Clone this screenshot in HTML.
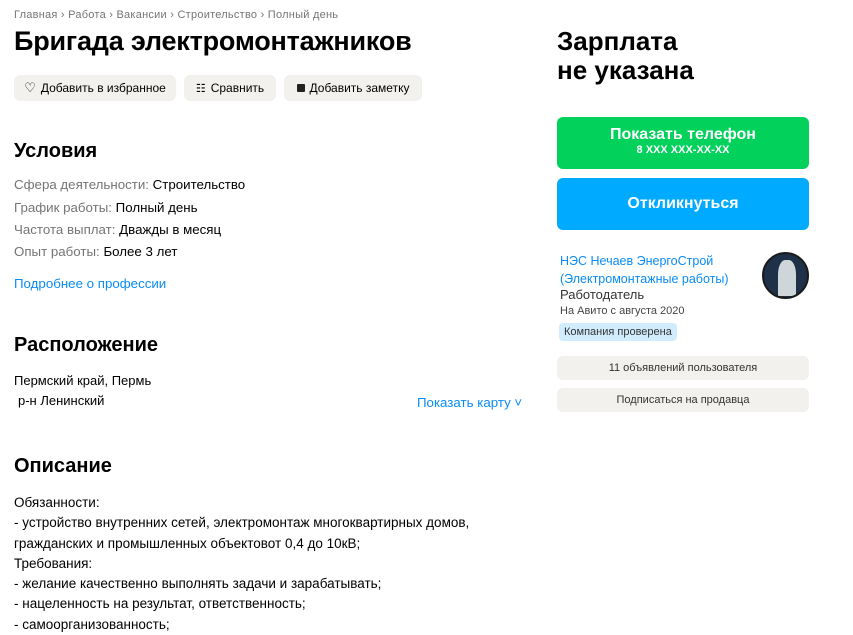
<!DOCTYPE html>
<html><head><meta charset="utf-8"><style>
*{margin:0;padding:0;box-sizing:border-box}
body{width:853px;height:632px;overflow:hidden;background:#fff;font-family:"Liberation Sans",sans-serif;color:#000;position:relative}
.a{position:absolute;white-space:nowrap}
.bc{font-size:11px;color:#757575;letter-spacing:0.25px}
h1{font-size:27px;font-weight:bold;letter-spacing:-0.2px}
h2{font-size:20px;font-weight:bold}
.btn{position:absolute;background:#f2f1ed;border-radius:6px;font-size:12px;display:flex;align-items:center;justify-content:center;gap:5px}
.t{font-size:13.3px}
.g{color:#757575}
.lnk{color:#0a8cf5}
</style></head><body>
<div class="a bc" style="left:14px;top:9px">Главная › Работа › Вакансии › Строительство › Полный день</div>
<h1 class="a" style="left:14px;top:26px">Бригада электромонтажников</h1>
<div class="btn" style="left:14px;top:75px;width:162px;height:26px"><span style="font-size:13px">♡</span>Добавить в избранное</div>
<div class="btn" style="left:184px;top:75px;width:92px;height:26px"><span style="font-size:11px">☷</span>Сравнить</div>
<div class="btn" style="left:284px;top:75px;width:138px;height:26px"><span style="display:inline-block;width:8px;height:8px;background:#222;border-radius:1px"></span>Добавить заметку</div>
<h2 class="a" style="left:14px;top:140px">Условия</h2>
<div class="a t" style="left:14px;top:177px"><span class="g">Сфера деятельности:</span> Строительство</div>
<div class="a t" style="left:14px;top:200px"><span class="g">График работы:</span> Полный день</div>
<div class="a t" style="left:14px;top:222px"><span class="g">Частота выплат:</span> Дважды в месяц</div>
<div class="a t" style="left:14px;top:244px"><span class="g">Опыт работы:</span> Более 3 лет</div>
<div class="a t lnk" style="left:14px;top:276px">Подробнее о профессии</div>
<h2 class="a" style="left:14px;top:334px">Расположение</h2>
<div class="a t" style="left:14px;top:373px;font-size:13px">Пермский край, Пермь</div>
<div class="a t" style="left:18px;top:393px;font-size:13px">р-н Ленинский</div>
<div class="a t lnk" style="left:417px;top:395px">Показать карту ˅</div>
<h2 class="a" style="left:14px;top:455px">Описание</h2>
<div class="a t" style="left:14px;top:493px;line-height:20.3px;font-size:13.5px">Обязанности:<br>- устройство внутренних сетей, электромонтаж многоквартирных домов,<br>гражданских и промышленных объектовот 0,4 до 10кВ;<br>Требования:<br>- желание качественно выполнять задачи и зарабатывать;<br>- нацеленность на результат, ответственность;<br>- самоорганизованность;</div>
<div class="a" style="left:557px;top:27px;font-size:26px;font-weight:bold;line-height:29px">Зарплата<br>не указана</div>
<div class="a" style="left:557px;top:117px;width:252px;height:52px;background:#02d15c;border-radius:6px;color:#fff;text-align:center"><div style="font-size:16px;font-weight:bold;margin-top:9px">Показать телефон</div><div style="font-size:11px;font-weight:bold">8 XXX XXX-XX-XX</div></div>
<div class="a" style="left:557px;top:178px;width:252px;height:52px;background:#00aaff;border-radius:6px;color:#fff;text-align:center;font-size:16px;font-weight:bold;line-height:52px">Откликнуться</div>
<div class="a lnk" style="left:560px;top:252px;font-size:12.5px;line-height:18px">НЭС Нечаев ЭнергоСтрой<br>(Электромонтажные работы)</div>
<div class="a" style="left:560px;top:287px;font-size:13px;color:#333">Работодатель</div>
<div class="a" style="left:560px;top:305px;font-size:11px;color:#444">На Авито с августа 2020</div>
<div class="a" style="left:559px;top:323px;height:18px;padding:0 5px;background:#d0ecfd;border-radius:4px;font-size:11px;line-height:18px;color:#333">Компания проверена</div>
<div class="a" style="left:762px;top:252px;width:47px;height:47px;border-radius:50%;background:#1f3148;border:2px solid #1a1a1a;overflow:hidden"><div style="position:absolute;left:14px;top:6px;width:18px;height:36px;background:#cfd6da;border-radius:40% 40% 0 0"></div></div>
<div class="btn" style="left:557px;top:356px;width:252px;height:24px;font-size:11px;color:#333">11 объявлений пользователя</div>
<div class="btn" style="left:557px;top:388px;width:252px;height:24px;font-size:11px;color:#333">Подписаться на продавца</div>
</body></html>
